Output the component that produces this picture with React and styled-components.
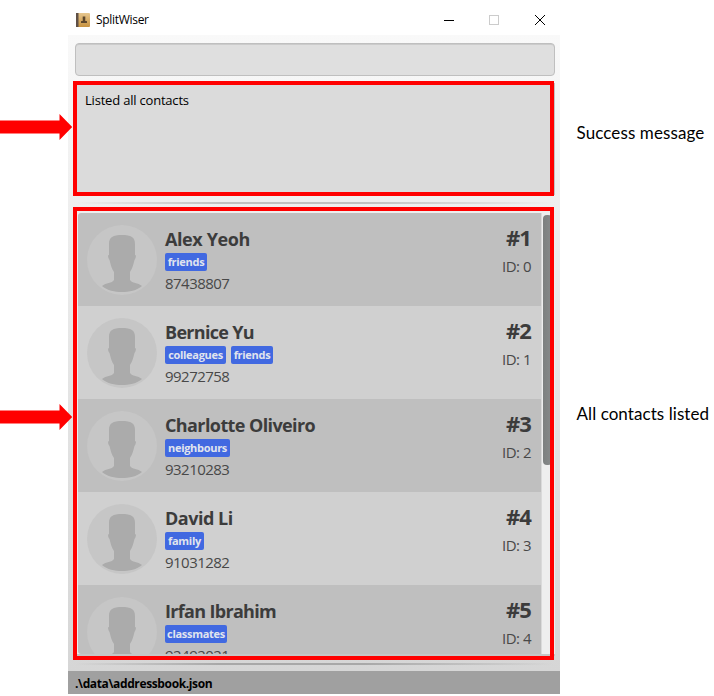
import React from 'react';
import styled, { createGlobalStyle, css } from 'styled-components';

const GlobalStyle = createGlobalStyle`
  * { box-sizing: border-box; }
  body { margin: 0; background: #fff; overflow: hidden; }
`;

const Page = styled.main`
  display: grid;
  grid-template-columns: 68px 492px 154px;
  width: 714px;
  height: 696px;
  font-family: 'Open Sans', 'Noto Sans', sans-serif;
  color: #000;
`;

const Gutter = styled.div`
  display: flex;
  flex-direction: column;
  gap: 264px;
  padding-top: 114px;
  position: relative;
  z-index: 2;
`;

const ArrowSvg = styled.svg`
  display: block;
  flex: none;
  width: 73px;
  height: 26px;
`;

const Window = styled.section`
  display: flex;
  flex-direction: column;
  height: 694px;
`;

const TitleBar = styled.header`
  display: flex;
  align-items: center;
  flex: none;
  height: 35px;
  padding: 4px 0 0 8px;
  background: #fff;
`;

const AppIcon = styled.svg`
  width: 14px;
  height: 14px;
  margin-right: 6px;
`;

const Title = styled.h1`
  flex: 1;
  margin: 0;
  font-size: 12px;
  font-weight: 400;
  line-height: 16px;
  letter-spacing: -0.3px;
`;

const Controls = styled.svg`
  width: 104px;
  height: 12px;
  margin-right: 13px;
`;

const Body = styled.div`
  flex: 1;
  min-height: 0;
  padding: 8px 5px 0 7px;
  background: linear-gradient(#f9f9f9, #efefef 26%, #e3e3e3 60%, #d6d6d6);
`;

const CommandField = styled.div`
  height: 33px;
  border: 1px solid #bfbfbf;
  border-radius: 4px;
  background: #dfdfdf;
  box-shadow: inset 0 1px 0 #cbcbcb;
`;

const Framed = styled.div`
  position: relative;
  &::after {
    content: '';
    position: absolute;
    inset: ${(p) => p.$inset};
    border: 4px solid #f00;
  }
`;

const ResultPane = styled(Framed)`
  height: 112px;
  margin-top: 7px;
  padding: 7px 10px;
  background: #dbdbdb;
  border-right: 1px solid #c4c4c4;
  font-size: 13px;
  line-height: 20px;
  letter-spacing: -0.2px;
`;

const Divider = styled.div`
  height: 2px;
  margin-top: ${(p) => p.$top}px;
  background: linear-gradient(90deg, transparent, ${(p) => p.$color} 30%, ${(p) => p.$color} 60%, transparent);
`;

const ListPane = styled(Framed)`
  display: flex;
  height: 445px;
  margin-top: 7px;
  padding: 2px 0 0 3px;
  background: #eee;
  border-bottom: 2px solid #c6c6c6;
`;

const Rows = styled.ul`
  width: 463px;
  margin: 0;
  padding: 0;
  overflow: hidden;
  list-style: none;
  border-radius: 3px 0 0 3px;
`;

const Row = styled.li`
  display: flex;
  height: 93px;
  padding: 12px 10px 0 9px;
  color: #3c3c3c;
  background: #d0d0d0;
  &:nth-child(odd) { background: #bfbfbf; }
`;

const AvatarSvg = styled.svg`
  flex: none;
  width: 70px;
  height: 70px;
`;

const Details = styled.div`
  flex: 1;
  padding: 1px 0 0 8px;
`;

const Name = styled.h2`
  margin: 0 0 1px;
  font-size: 18px;
  font-weight: 700;
  line-height: 26px;
  letter-spacing: ${(p) => p.$spacing}px;
  white-space: nowrap;
`;

const Tags = styled.div`
  display: flex;
  gap: 5px;
  height: 18px;
`;

const Tag = styled.span`
  height: 18px;
  width: ${(p) => p.$width}px;
  border-radius: 2px;
  background: #4169e1;
  color: #e0e4ee;
  text-align: center;
  font-size: 11px;
  font-weight: 700;
  line-height: 18px;
  letter-spacing: -0.3px;
  white-space: nowrap;
`;

const plain = css`
  color: #484848;
  font-size: 15px;
  font-weight: 400;
  line-height: 24px;
`;

const Phone = styled.div`
  ${plain}
  letter-spacing: -0.53px;
`;

const Meta = styled.div`
  flex: none;
  text-align: right;
`;

const Index = styled.div`
  margin-top: -2px;
  font-size: 22px;
  font-weight: 700;
  line-height: 28px;
  letter-spacing: -0.9px;
`;

const Id = styled.div`
  ${plain}
  margin-top: 3px;
  letter-spacing: -0.5px;
`;

const Track = styled.div`
  width: 11px;
  padding: 2px 0 0 1px;
  border-left: 1px solid #dadada;
`;

const Thumb = styled.div`
  width: 9px;
  height: 250px;
  border-radius: 4px;
  background: linear-gradient(90deg, #7d8080, #888b8b);
`;

const StatusBar = styled.footer`
  flex: none;
  height: 23px;
  padding: 3px 0 0 7px;
  background: #a0a0a0;
  font-size: 12px;
  font-weight: 700;
  line-height: 20px;
  letter-spacing: -0.37px;
`;

const Notes = styled.aside`
  display: flex;
  flex-direction: column;
  gap: 257px;
  padding: 121px 0 0 16.5px;
  font-family: Lato, 'Open Sans', sans-serif;
  font-size: 17px;
  line-height: 24px;
  white-space: nowrap;
`;

const Note = styled.div`
  letter-spacing: ${(p) => p.$spacing}px;
`;

const contacts = [
  { name: 'Alex Yeoh', sp: -0.4, tags: [['friends', 42]], phone: '87438807' },
  { name: 'Bernice Yu', sp: -0.7, tags: [['colleagues', 61], ['friends', 42]], phone: '99272758' },
  { name: 'Charlotte Oliveiro', sp: -0.6, tags: [['neighbours', 65]], phone: '93210283' },
  { name: 'David Li', sp: -0.5, tags: [['family', 39]], phone: '91031282' },
  { name: 'Irfan Ibrahim', sp: -0.68, tags: [['classmates', 62]], phone: '92492021' },
];

const Arrow = () => (
  <ArrowSvg viewBox="0 0 73 26">
    <path d="M0 6.5H59.5V0L72.2 13L59.5 26V19.5H0Z" fill="#f00" />
  </ArrowSvg>
);

const Avatar = () => (
  <AvatarSvg viewBox="0 0 70 70">
    <circle cx="35" cy="35" r="35" fill="#c6c6c6" />
    <path
      d="M22 19C22 12 26 10 35 10S48 12 48 19V30C49.5 30 49 33 47.5 35C46 41 45 44 43 47V55C45 58.5 51 57.5 55 61C50 65.5 42 67 35 67S20 65.5 15 61C19 57.5 25 58.5 27 55V47C25 44 24 41 22.5 35C21 33 20.5 30 22 30Z"
      fill="#ababab"
    />
  </AvatarSvg>
);

export default function App() {
  return (
    <>
      <GlobalStyle />
      <Page>
        <Gutter>
          <Arrow />
          <Arrow />
        </Gutter>
        <Window>
          <TitleBar>
            <AppIcon viewBox="0 0 14 14">
              <defs>
                <linearGradient id="book" x2="0" y2="1">
                  <stop offset="0" stopColor="#e6c68e" />
                  <stop offset="1" stopColor="#c7923f" />
                </linearGradient>
              </defs>
              <rect width="14" height="14" rx="1" fill="url(#book)" />
              <rect width="2.500" height="14" fill="#5f5047" />
              <path d="M6.700 3.500h2.600v3L8.800 7.500L11 8.300V10H5V8.300L7.200 7.500L6.700 6.500Z" fill="#5b462c" />
            </AppIcon>
            <Title>SplitWiser</Title>
            <Controls viewBox="0 0 104 12" fill="none" shapeRendering="crispEdges">
              <path d="M1 6.500H11" stroke="#000" />
              <rect x="46.500" y="1.500" width="9" height="9" stroke="#ccc" />
              <path d="M92 1L102 11M102 1L92 11" stroke="#000" shapeRendering="auto" />
            </Controls>
          </TitleBar>
          <Body>
            <CommandField />
            <ResultPane $inset="-2px 0 -1px -2px">Listed all contacts</ResultPane>
            <Divider $top={7} $color="#c0c0c0" />
            <ListPane $inset="-4px 1px -6px -2px">
              <Rows>
                {contacts.map((c, i) => (
                  <Row key={c.name}>
                    <Avatar />
                    <Details>
                      <Name $spacing={c.sp}>{c.name}</Name>
                      <Tags>
                        {c.tags.map(([label, width]) => (
                          <Tag key={label} $width={width}>{label}</Tag>
                        ))}
                      </Tags>
                      <Phone>{c.phone}</Phone>
                    </Details>
                    <Meta>
                      <Index>#{i + 1}</Index>
                      <Id>ID: {i}</Id>
                    </Meta>
                  </Row>
                ))}
              </Rows>
              <Track>
                <Thumb />
              </Track>
            </ListPane>
            <Divider $top={7} $color="#a8a8a8" />
          </Body>
          <StatusBar>.\data\addressbook.json</StatusBar>
        </Window>
        <Notes>
          <Note $spacing={0.1}>Success message</Note>
          <Note $spacing={0.07}>All contacts listed</Note>
        </Notes>
      </Page>
    </>
  );
}
